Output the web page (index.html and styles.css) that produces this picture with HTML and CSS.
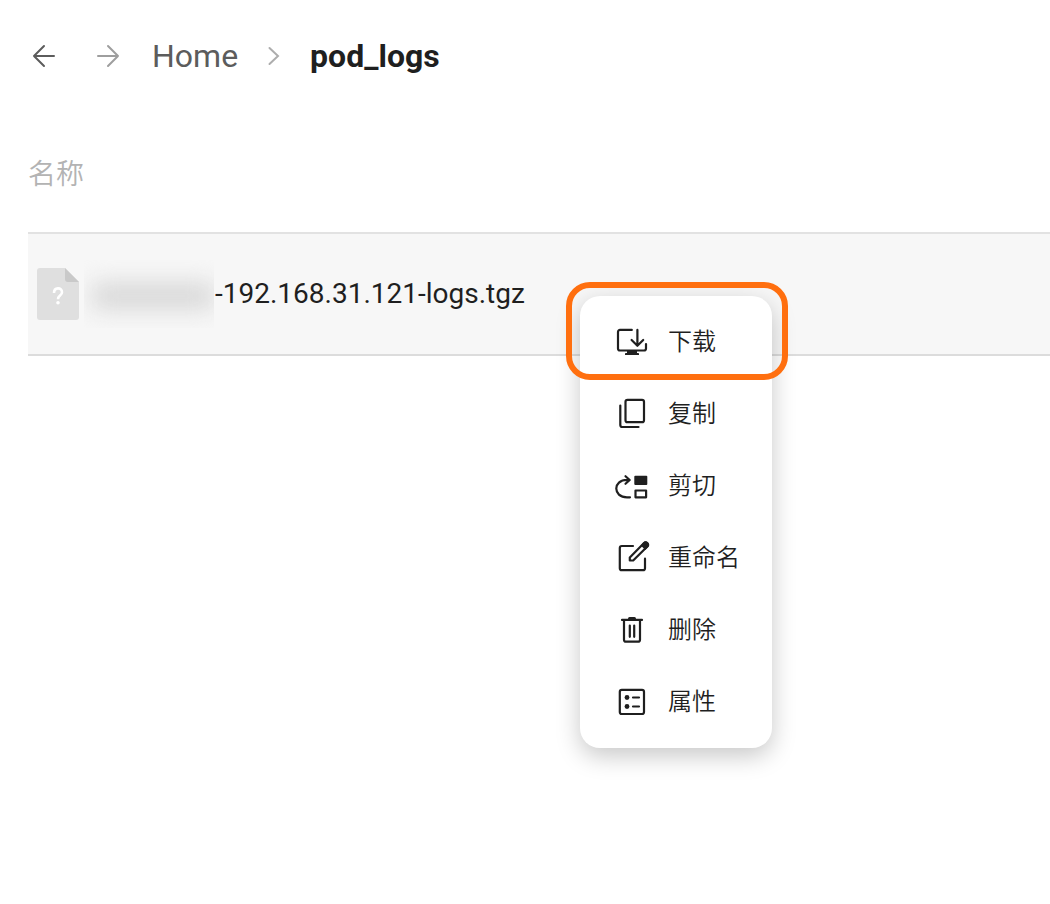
FILE: index.html
```
<!DOCTYPE html>
<html lang="zh-CN">
<head>
<meta charset="utf-8">
<title>pod_logs</title>
<link rel="stylesheet" href="styles.css">
</head>
<body>
<header class="toolbar">
  <button class="nav-button" type="button" aria-label="后退">
    <svg class="nav-icon" viewBox="0 0 24 24"><path d="M22 12H2M12 2 2 12l10 10"/></svg>
  </button>
  <button class="nav-button nav-forward" type="button" aria-label="前进">
    <svg class="nav-icon" viewBox="0 0 24 24"><path d="M2 12H22M12 2l10 10-10 10"/></svg>
  </button>
  <nav class="breadcrumb" aria-label="路径">
    <a class="crumb" href="#">Home</a>
    <svg class="chevron" viewBox="0 0 12 20"><path d="M1.500 2 10 10l-8.500 8"/></svg>
    <span class="crumb-current">pod_logs</span>
  </nav>
</header>

<main class="files">
  <table class="file-table">
    <thead><tr><th scope="col">名称</th></tr></thead>
    <tbody>
      <tr>
        <td>
          <div class="file">
            <svg class="file-icon" viewBox="0 0 42 54" aria-hidden="true">
              <path fill="#dfdfdf" d="M3 1h25l14 14v35a3 3 0 0 1-3 3H3a3 3 0 0 1-3-3V4a3 3 0 0 1 3-3z"/>
              <path fill="#c9c9c9" d="M28 1l14 14H31a3 3 0 0 1-3-3z"/>
              <path fill="none" stroke="#fff" stroke-width="2.600" d="M17 26c0-6 8-6 8-.8 0 3.400-4 3.400-4 7"/>
              <circle fill="#fff" cx="21" cy="35.800" r="1.800"/>
            </svg>
            <span class="redacted"></span>
            <span class="file-name">-192.168.31.121-logs.tgz</span>
          </div>
        </td>
      </tr>
    </tbody>
  </table>
</main>

<div class="menu" role="menu">
  <button class="menu-item" type="button" role="menuitem">
    <svg class="menu-icon" viewBox="0 0 40 40">
      <path d="M19.800 7.900H8a2 2 0 0 0-2 2V26.500a2 2 0 0 0 2 2h24a2 2 0 0 0 2-2v-4.500M25.400 7.900V23.500M19.600 18l5.800 5.800 5.800-5.800"/>
      <path class="solid" d="M15 28.500h10v2.500h1a1 1 0 0 1 1 1.200v.8H13v-.8a1 1 0 0 1 1-1.200h1z"/>
    </svg>
    <span>下载</span>
  </button>
  <button class="menu-item" type="button" role="menuitem">
    <svg class="menu-icon" viewBox="0 0 40 40">
      <rect x="13.500" y="5.800" width="18.500" height="22.400" rx="2"/>
      <path d="M8.300 11.500v19.500a2 2 0 0 0 2 2H26.500"/>
    </svg>
    <span>复制</span>
  </button>
  <button class="menu-item" type="button" role="menuitem">
    <svg class="menu-icon" viewBox="0 0 40 40">
      <path d="M18 31.300h-3C.7 31.300.7 13.900 15 13.900h2.500M13.500 10.200l4.200 3.800-4.200 3.800"/>
      <rect class="solid" x="22.300" y="9.800" width="13" height="9.300" rx="1"/>
      <rect x="23.500" y="24.500" width="10.600" height="6.800"/>
    </svg>
    <span>剪切</span>
  </button>
  <button class="menu-item" type="button" role="menuitem">
    <svg class="menu-icon" viewBox="0 0 40 40">
      <path d="M21 8H9.800a2 2 0 0 0-2 2V30.200a2 2 0 0 0 2 2H31a2 2 0 0 0 2-2v-9.500"/>
      <path d="M17.800 22.500v-3L31.800 5.200a2.300 2.300 0 0 1 3.500 3.400L21.200 22.500z"/>
      <path class="solid" d="M28.800 7.600 31.200 4.500a3.200 3.200 0 0 1 4.900 4.800L33.300 12z"/>
    </svg>
    <span>重命名</span>
  </button>
  <button class="menu-item" type="button" role="menuitem">
    <svg class="menu-icon" viewBox="0 0 40 40">
      <path d="M10 9.900h20M12 10v19.700a2 2 0 0 0 2 2h12a2 2 0 0 0 2-2V10M17.800 15.500v11.300M22.200 15.500v11.300"/>
      <path class="solid" d="M17.500 7h5a1.500 1.500 0 0 1 1.500 1.500V10h-8V8.500A1.500 1.500 0 0 1 17.500 7z"/>
    </svg>
    <span>删除</span>
  </button>
  <button class="menu-item" type="button" role="menuitem">
    <svg class="menu-icon" viewBox="0 0 40 40">
      <rect x="7.800" y="7.800" width="24.200" height="24.200" rx="2"/>
      <path d="M21 15.500h6M21 24.500h6"/>
      <circle class="solid" cx="15" cy="15.500" r="2.400"/>
      <circle class="solid" cx="15" cy="24.500" r="2.400"/>
    </svg>
    <span>属性</span>
  </button>
  <span class="highlight"></span>
</div>
</body>
</html>
```

FILE: styles.css
```
* {
  box-sizing: border-box;
}

body {
  margin: 0;
  background: #fff;
  color: #1f1f1f;
  font-family: Roboto, "Noto Sans CJK SC", sans-serif;
}

button {
  border: 0;
  padding: 0;
  background: none;
  color: inherit;
  font: inherit;
  cursor: pointer;
}

svg {
  display: block;
  flex: none;
}

.toolbar {
  display: flex;
  align-items: center;
  gap: 40px;
  height: 112px;
  padding-left: 32px;
}

.nav-button {
  color: #5c5c5c;
}

.nav-forward {
  color: #9e9e9e;
}

.nav-icon {
  width: 24px;
  height: 24px;
  fill: none;
  stroke: currentColor;
  stroke-width: 2;
  stroke-linecap: round;
  stroke-linejoin: round;
}

.breadcrumb {
  display: flex;
  align-items: center;
  gap: 30px;
  margin-left: -8px;
  font-size: 32px;
  line-height: 40px;
}

.crumb {
  color: #5c5c5c;
  text-decoration: none;
}

.crumb-current {
  font-weight: 700;
}

.chevron {
  width: 12px;
  height: 20px;
  fill: none;
  stroke: #adadad;
  stroke-width: 2;
  stroke-linecap: round;
}

.files {
  padding-left: 28px;
}

.file-table {
  width: 100%;
  border-collapse: separate;
  border-spacing: 0;
}

.file-table th {
  height: 120px;
  padding: 0;
  color: #b3b3b3;
  font-size: 28px;
  font-weight: 350;
  text-align: left;
}

.file-table td {
  height: 124px;
  padding: 0 9px;
  border-top: 2px solid #e2e2e2;
  border-bottom: 2px solid #dcdcdc;
  background: #f7f7f7;
}

.file {
  display: flex;
  align-items: center;
}

.file-icon {
  width: 42px;
  height: 54px;
}

.redacted {
  width: 130px;
  height: 68px;
  margin: 0 1px 0 5px;
  padding: 24px 0 20px 8px;
  overflow: hidden;
}

.redacted::before {
  content: "";
  display: block;
  height: 100%;
  background: #d4d4d4;
  filter: blur(12px);
}

.file-name {
  font-size: 28px;
  line-height: 36px;
}

.menu {
  position: absolute;
  top: 296px;
  left: 580px;
  width: 192px;
  padding: 10px 0;
  border-radius: 20px;
  background: #fff;
  box-shadow: 0 8px 24px rgba(0, 0, 0, 0.22);
}

.menu-item {
  display: flex;
  align-items: center;
  gap: 16px;
  width: 100%;
  height: 72px;
  padding-left: 32px;
  font-size: 24px;
  font-weight: 350;
  line-height: 32px;
}

.menu-icon {
  width: 40px;
  height: 40px;
  fill: none;
  stroke: #1f1f1f;
  stroke-width: 2.2;
  stroke-linecap: round;
  stroke-linejoin: round;
}

.solid {
  fill: #1f1f1f;
  stroke: none;
}

.highlight {
  position: absolute;
  top: -14px;
  right: -16px;
  left: -14px;
  height: 98px;
  border: 6px solid #ff6f0f;
  border-radius: 24px;
  pointer-events: none;
}
```
